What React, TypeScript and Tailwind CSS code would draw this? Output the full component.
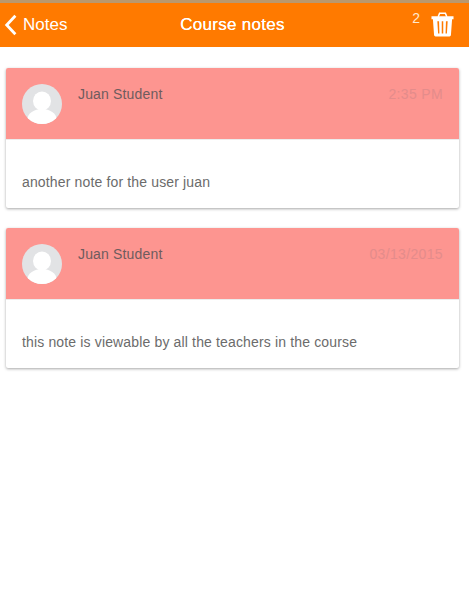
function Avatar() {
  return (
    <svg viewBox="0 0 40 40" className="w-10 h-10 shrink-0">
      <defs>
        <clipPath id="avatar-clip">
          <circle cx="20" cy="20" r="20" />
        </clipPath>
      </defs>
      <circle cx="20" cy="20" r="20" fill="#e2e3e5" />
      <g clipPath="url(#avatar-clip)" fill="#ffffff">
        <ellipse cx="20" cy="17" rx="9" ry="9.5" />
        <ellipse cx="20" cy="35" rx="14.5" ry="10" />
      </g>
    </svg>
  )
}

function TrashIcon() {
  return (
    <svg viewBox="0 0 24 26" className="w-[23px] h-[25px]">
      <path d="M7.5 5 L9 1.2 H15 L16.5 5" fill="none" stroke="#fff" strokeWidth="1.6" />
      <path
        fillRule="evenodd"
        fill="#fff"
        d="M0.5 4.5 H23.5 V7.5 H22 L20.8 24 Q20.7 25.5 19.3 25.5 H4.7 Q3.3 25.5 3.2 24 L2 7.5 H0.5 Z M6.6 9.5 L7.4 22.5 H8.8 L8.4 9.5 Z M11.2 9.5 V22.5 H12.8 V9.5 Z M15.6 9.5 L15.2 22.5 H16.6 L17.4 9.5 Z"
      />
    </svg>
  )
}

const notes = [
  { name: 'Juan Student', time: '2:35 PM', text: 'another note for the user juan' },
  { name: 'Juan Student', time: '03/13/2015', text: 'this note is viewable by all the teachers in the course' },
]

function NoteCard({ name, time, text }: { name: string; time: string; text: string }) {
  return (
    <div className="rounded-[2px] bg-white shadow-[0_1px_3px_rgba(0,0,0,0.35)] overflow-hidden">
      <div className="h-[72px] bg-[#fd9590] flex px-4 pt-4 border-b border-[#ececec]">
        <Avatar />
        <span className="ml-4 text-sm leading-5 tracking-[0.16px] text-[#6f5c5e]">{name}</span>
        <span className="ml-auto text-sm leading-5 tracking-[0.35px] text-[#e48c8b]">{time}</span>
      </div>
      <div className="h-[68px] px-4 pt-[32px] text-sm leading-5 tracking-[0.15px] text-[#6b6b6b]">{text}</div>
    </div>
  )
}

export default function App() {
  return (
    <div className="w-[469px] h-[606px] bg-white font-['Liberation_Sans',Arial,sans-serif] overflow-hidden">
      <div className="h-[47px] bg-[#ff7a00] border-t-[3px] border-[#b9986f] flex items-center relative text-white">
        <div className="flex items-center pl-[4px]">
          <svg viewBox="0 0 12 20" className="w-[13px] h-[22px]">
            <path d="M10.5 1.5 L2.5 10 L10.5 18.5" fill="none" stroke="#fff" strokeWidth="2.6" />
          </svg>
          <span className="ml-[6px] text-[17px]">Notes</span>
        </div>
        <span className="absolute left-0 right-0 pr-[4px] text-center text-[17px] tracking-[0.3px] [text-shadow:0_0_0.4px_#fff]">Course notes</span>
        <div className="ml-auto flex pr-[15px] -mt-[2px]">
          <span className="text-sm leading-4 -mt-[2px] mr-[11px] text-[#ffe9cf]">2</span>
          <TrashIcon />
        </div>
      </div>
      <div className="pl-[6px] pr-[10px] pt-[21px] flex flex-col gap-[20px]">
        {notes.map((n, i) => (
          <NoteCard key={i} {...n} />
        ))}
      </div>
    </div>
  )
}
